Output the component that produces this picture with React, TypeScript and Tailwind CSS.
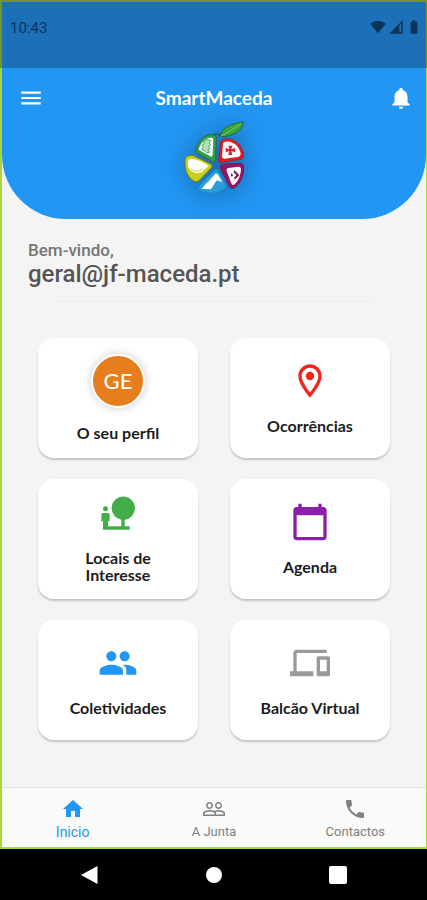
import {
  MdBatteryFull,
  MdDevices,
  MdHome,
  MdMenu,
  MdNaturePeople,
  MdNetworkCell,
  MdNotifications,
  MdPeople,
  MdPeopleOutline,
  MdPhone,
  MdSignalWifi4Bar,
} from 'react-icons/md'
import { clsx } from 'clsx'
import type { ElementType } from 'react'

// ─── Icons ────────────────────────────────────────────────────────────────────

interface IconProps {
  className?: string
}

function PinIcon({ className }: IconProps) {
  return (
    <svg viewBox="0 0 24 24" fill="currentColor" className={className} aria-hidden>
      <path d="M12 2C8.13 2 5 5.13 5 9c0 5.25 7 13 7 13s7-7.75 7-13c0-3.87-3.13-7-7-7zM7 9c0-2.76 2.24-5 5-5s5 2.24 5 5c0 2.88-2.88 7.19-5 9.88C9.92 16.21 7 11.85 7 9z" />
      <circle cx="12" cy="9" r="2.5" />
    </svg>
  )
}

function CalendarIcon({ className }: IconProps) {
  return (
    <svg viewBox="0 0 24 24" fill="currentColor" className={className} aria-hidden>
      <path d="M20 3h-1V1h-2v2H7V1H5v2H4c-1.100 0-2 .9-2 2v16c0 1.100.9 2 2 2h16c1.100 0 2-.9 2-2V5c0-1.100-.9-2-2-2zm0 18H4V8h16v13z" />
    </svg>
  )
}

// ─── Config ───────────────────────────────────────────────────────────────────

const SHORTCUTS = [
  { label: 'Ocorrências',         icon: PinIcon,        color: 'text-[#f0261b]' },
  { label: 'Locais de Interesse', icon: MdNaturePeople, color: 'text-[#43ad4a]' },
  { label: 'Agenda',              icon: CalendarIcon,   color: 'text-[#8a1fa8]' },
  { label: 'Coletividades',       icon: MdPeople,       color: 'text-[#2196f3]' },
  { label: 'Balcão Virtual',      icon: MdDevices,      color: 'text-[#9a9a9a]' },
]

const TABS = [
  { label: 'Inicio',    icon: MdHome,          active: true },
  { label: 'A Junta',   icon: MdPeopleOutline, active: false },
  { label: 'Contactos', icon: MdPhone,         active: false },
]

// ─── Logo ─────────────────────────────────────────────────────────────────────

function Logo() {
  return (
    <svg
      viewBox="35 30 195 219"
      className="h-[73px] w-[65px] drop-shadow-[0_2px_12px_rgba(0,0,0,0.3)]"
      role="img"
      aria-label="Maceda"
    >
      {/* leaf and stalk */}
      <path d="M150 80C152 58 172 42 219 36C216 62 190 80 150 80Z" fill="#3aa53c" stroke="#26672f" strokeWidth="3" />
      <path d="M151 79C172 68 190 56 212 41" fill="none" stroke="#7ccb6a" strokeWidth="3" />
      <path d="M150 78C145 72 137 71 131 74" fill="none" stroke="#2c5f35" strokeWidth="4" />

      {/* green slice */}
      <path d="M134 77C108 66 82 92 76 121Q75 127 81 130L128 156Q136 158 136 149L138 84Q138 79 134 77Z" fill="#2fa344" stroke="#3d5a45" strokeWidth="3" />
      <path d="M126 84C108 80 91 98 85 119L120 139Q127 142 127 133L129 90Q129 86 126 84Z" fill="#fff" />
      <path d="M105 91l8-3 8 4-5 7 6 5-8 5 5 7-7 3 6 8-9 1-7-6-8-3 5-7-4-7 7-4-3-6z" fill="#b8dfbf" stroke="#4aae5c" strokeWidth="3" />

      {/* red slice */}
      <path d="M157 89C184 79 211 98 220 131Q221 144 213 148L150 158Q144 158 145 151L151 96Q152 91 157 89Z" fill="#e31b25" stroke="#743443" strokeWidth="3" />
      <path d="M165 95C186 91 206 107 211 130Q212 138 206 140L162 146Q155 146 155 139L158 102Q159 96 165 95Z" fill="#fff" />
      <path d="M174 107h12l-3 11 11-4v13l-11-4 3 12h-12l3-12-11 4v-13l11 4z" fill="#dd2231" />

      {/* yellow slice */}
      <path d="M56 137Q45 138 44 150C42 181 54 210 77 215Q84 216 89 209L123 174Q129 166 121 162L72 138Q64 135 56 137Z" fill="#c8cf19" stroke="#747924" strokeWidth="3" />
      <path d="M60 146C78 145 102 159 115 167L94 187C78 194 54 186 52 162Q52 148 60 146Z" fill="#fff" />
      <path d="M62 177C75 186 88 186 98 176" fill="none" stroke="#dde05c" strokeWidth="4" />

      {/* blue slice */}
      <path d="M132 182Q139 176 144 183L165 226Q167 233 160 237C138 252 104 250 88 239Q82 233 88 226Z" fill="#279fd7" stroke="#2a8fc8" strokeWidth="3" />
      <path d="M135 191L142 192L156 216L139 211L122 238L94 236L108 220Z" fill="#fff" />
      <path d="M122 208L111 218" fill="none" stroke="#8ed1f1" strokeWidth="3" />

      {/* purple slice */}
      <path d="M158 163L211 160Q220 161 220 170C222 198 206 226 190 235Q182 238 177 229L150 174Q148 165 158 163Z" fill="#9b1260" stroke="#5f2557" strokeWidth="3" />
      <path d="M174 174L205 170Q212 170 212 178C211 199 201 218 190 225Q185 226 183 220L169 183Q167 176 174 174Z" fill="#fff" />
      <path d="M193 181l14 15-13 13-3-6 7-7-9-10zM183 190l6 5-5 5-3-5z" fill="#75245f" />
    </svg>
  )
}

// ─── Shortcut card ────────────────────────────────────────────────────────────

interface ShortcutCardProps {
  label: string
  icon: ElementType
  color: string
}

const CARD =
  'flex min-h-[120px] flex-col items-center justify-center gap-4 rounded-2xl bg-white px-5 pb-0.5 text-base leading-[17px] font-bold text-[#1c1c1c] shadow-[0_2px_2px_rgba(0,0,0,0.2)]'

function ShortcutCard({ label, icon: Icon, color }: ShortcutCardProps) {
  return (
    <button type="button" className={CARD}>
      <Icon className={clsx('size-10 shrink-0', color)} />
      <span className="max-w-[110px]">{label}</span>
    </button>
  )
}

// ─── App ──────────────────────────────────────────────────────────────────────

export default function App() {
  return (
    <div className="flex min-h-screen flex-col bg-black font-[Roboto,sans-serif]">
      <div className="flex flex-1 flex-col border-t-2 border-r border-b-2 border-l-2 border-[#a9d63c] bg-[#f4f4f4]">
        {/* Status bar */}
        <div className="-mt-0.5 -mr-px -ml-0.5 flex h-[68px] items-start justify-between border-t-2 border-r border-l-2 border-[#6f9530] bg-[#1b70b7] pt-[17px] pr-1 pl-2 text-[#0c3358]">
          <span className="text-[15px] leading-[18px]">10:43</span>
          <div className="flex items-center">
            <MdSignalWifi4Bar className="size-4" />
            <MdNetworkCell className="ml-0.5 size-4" />
            <MdBatteryFull className="ml-0.5 size-4" />
          </div>
        </div>

        {/* Header */}
        <header className="flex flex-col items-center rounded-b-[64px] bg-[#2196f3] pb-[26px] text-white">
          <div className="grid h-[52px] w-full grid-cols-[26px_1fr_26px] items-center px-4 pt-2">
            <button type="button" aria-label="Abrir menu">
              <MdMenu className="size-[26px]" />
            </button>
            <h1 className="text-center font-[Lato,sans-serif] text-[19px] font-bold">SmartMaceda</h1>
            <button type="button" aria-label="Notificações" className="-mr-1 justify-self-end">
              <MdNotifications className="size-[26px]" />
            </button>
          </div>
          <Logo />
        </header>

        {/* Welcome */}
        <section className="px-[26px] pt-5 font-medium">
          <p className="text-[17px] leading-[22px] text-[#757575]">Bem-vindo,</p>
          <p className="text-2xl leading-[26px] text-[#555]">geral@jf-maceda.pt</p>
          <hr className="mx-7 mt-[14px] border-[#ececec]" />
        </section>

        {/* Shortcuts */}
        <main className="grid grid-cols-2 gap-x-8 gap-y-[21px] px-9 py-9 font-[Lato,sans-serif]">
          <button type="button" className={CARD}>
            <span className="flex size-[54px] items-center justify-center rounded-full border-2 border-white bg-[#e67e1e] text-[22px] font-normal text-white shadow-[0_0_10px_rgba(0,0,0,0.2)]">
              GE
            </span>
            <span>O seu perfil</span>
          </button>
          {SHORTCUTS.map(item => (
            <ShortcutCard key={item.label} {...item} />
          ))}
        </main>

        {/* Tabs */}
        <nav className="mt-auto grid grid-cols-3 border-t border-[#e3e3e3] bg-[#fafafa]">
          {TABS.map(({ label, icon: Icon, active }) => (
            <a
              key={label}
              href="#"
              aria-current={active ? 'page' : undefined}
              className={clsx(
                'flex h-[59px] flex-col items-center pt-[9px] leading-[22px]',
                active ? 'text-sm text-[#2196f3]' : 'text-[13px] text-[#808080]',
              )}
            >
              <Icon className="size-6" />
              {label}
            </a>
          ))}
        </nav>
      </div>

      {/* System buttons */}
      <div className="flex h-[51px] items-center justify-between px-20 text-white">
        <button type="button" aria-label="Voltar">
          <svg viewBox="0 0 18 18" className="size-[18px]" fill="currentColor">
            <path d="M17.500 0V18L1 9Z" />
          </svg>
        </button>
        <button type="button" aria-label="Ecrã inicial" className="size-4 rounded-full bg-white" />
        <button type="button" aria-label="Recentes" className="size-[18px] rounded-xs bg-white" />
      </div>
    </div>
  )
}
